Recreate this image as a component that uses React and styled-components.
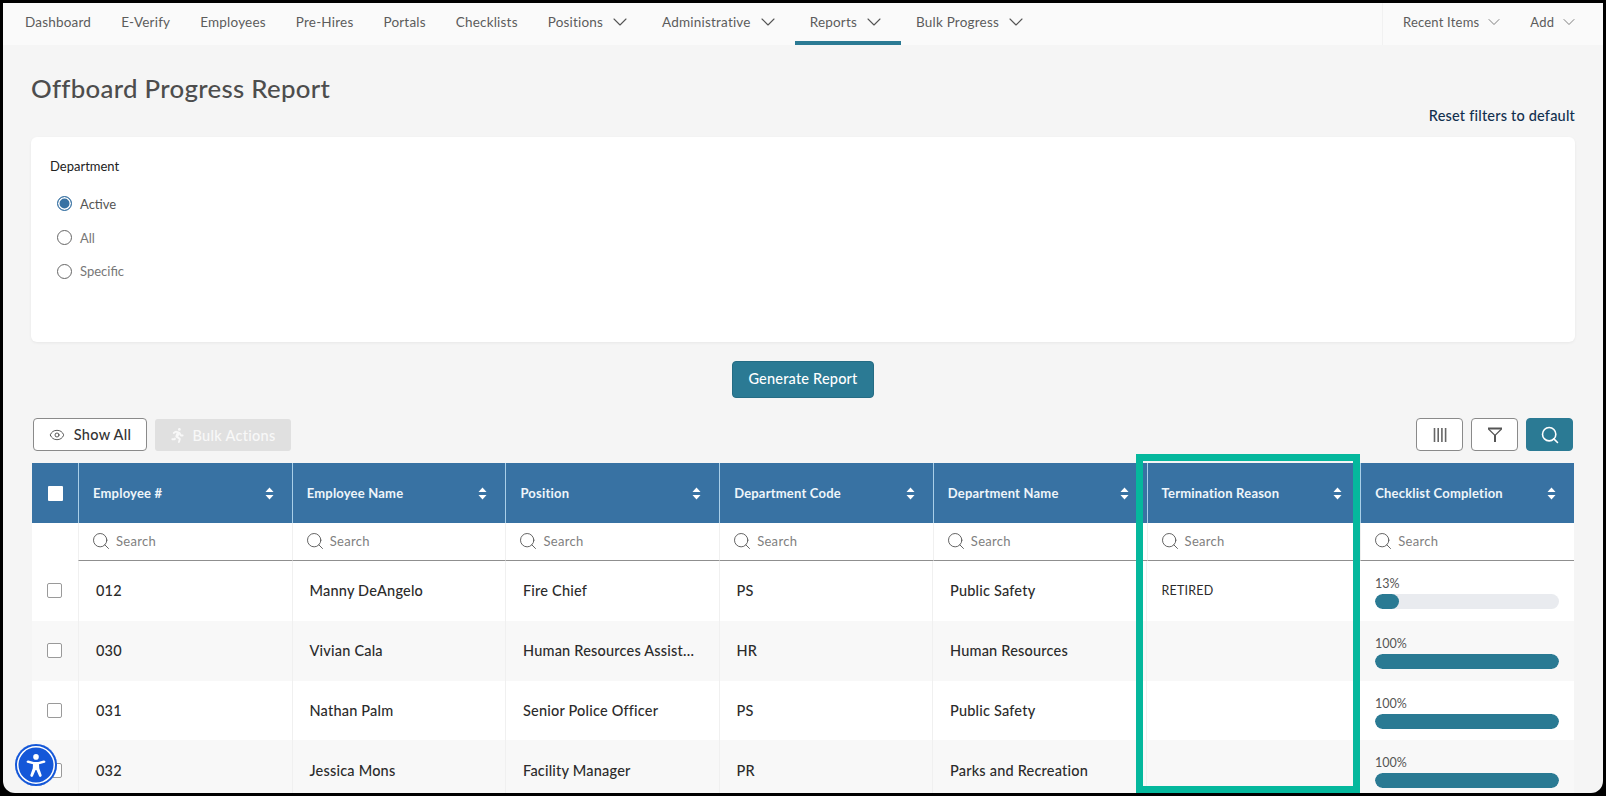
import React from 'react';
import styled, { createGlobalStyle } from 'styled-components';
import { ChevronDown, Eye, Search } from 'lucide-react';
import { FaRunning } from 'react-icons/fa';

const GlobalStyle = createGlobalStyle`
  html, body {
    margin: 0;
    height: 100%;
    overflow: hidden;
    background: #000;
  }
  * { box-sizing: border-box; }
`;

const Frame = styled.div`
  position: relative;
  margin: 3px;
  height: 790px;
  overflow: hidden;
  background: #f5f5f5;
  border-radius: 0 0 12px 12px;
  font-family: Lato, "Liberation Sans", sans-serif;
`;

const Nav = styled.nav`
  display: flex;
  justify-content: space-between;
  height: 42px;
  background: #fafafa;
`;

const NavLeft = styled.div`
  display: flex;
  padding-left: 7px;
`;

const NavItem = styled.a`
  display: flex;
  align-items: center;
  gap: 5px;
  height: 42px;
  padding: 0 15px;
  color: #5c5c5c;
  font-size: 13.5px;
  letter-spacing: 0.2px;
  border-bottom: 4px solid ${({ $active }) => ($active ? '#2b7a94' : 'transparent')};
`;

const NavRight = styled.div`
  display: flex;
  align-items: center;
  gap: 26px;
  width: 221px;
  padding: 0 0 5px 20px;
  border-left: 1px solid #f1f1f1;
`;

const RightItem = styled.a`
  display: flex;
  align-items: center;
  gap: 5px;
  color: #5c5c5c;
  font-size: 13px;
  letter-spacing: 0.2px;
`;

const Main = styled.main`
  padding: 0 28px;
`;

const Title = styled.h1`
  margin: 0;
  padding-top: 25px;
  height: 61px;
  font-size: 25.8px;
  line-height: 36px;
  font-weight: 500;
  color: #4d4d4d;
  letter-spacing: 0.3px;
`;

const ResetRow = styled.div`
  display: flex;
  justify-content: flex-end;
  height: 31px;
  padding-top: 1px;
`;

const ResetLink = styled.a`
  color: #12304f;
  font-size: 14.5px;
  line-height: 18px;
  font-weight: 500;
  letter-spacing: 0.2px;
`;

const FilterCard = styled.section`
  height: 205px;
  padding: 20px 19px;
  background: #fff;
  border-radius: 6px;
  box-shadow: 0 1px 3px rgba(0, 0, 0, 0.06);
`;

const FieldLabel = styled.div`
  margin-bottom: 12px;
  color: #222;
  font-size: 13px;
  line-height: 18px;
`;

const RadioRow = styled.label`
  display: flex;
  align-items: center;
  gap: 8px;
  height: 33.7px;
  padding-left: 7px;
  color: ${({ $checked }) => ($checked ? '#555' : '#777')};
  font-size: 13px;
`;

const RadioDot = styled.span`
  width: 15px;
  height: 15px;
  border-radius: 50%;
  border: 1px solid ${({ $checked }) => ($checked ? '#3872a3' : '#666')};
  background: ${({ $checked }) => ($checked ? '#3872a3' : '#fff')};
  box-shadow: ${({ $checked }) => ($checked ? 'inset 0 0 0 1.5px #fff' : 'none')};
`;

const GenerateRow = styled.div`
  display: flex;
  justify-content: center;
  padding-top: 19px;
  height: 76px;
`;

const PrimaryButton = styled.button`
  width: 142px;
  height: 37px;
  padding: 0 0 2px;
  border: 1px solid #256c84;
  border-radius: 4px;
  background: #2b7a94;
  color: #fff;
  font: 500 14.5px Lato, sans-serif;
  letter-spacing: 0.2px;
`;

const Toolbar = styled.div`
  display: flex;
  justify-content: space-between;
  height: 45px;
  padding: 0 2px;
`;

const ToolGroup = styled.div`
  display: flex;
  gap: 8px;
`;

const OutlineButton = styled.button`
  display: flex;
  align-items: center;
  justify-content: center;
  gap: 9px;
  width: ${({ $wide }) => ($wide ? '114px' : '47px')};
  height: 33px;
  padding: 0;
  border: 1px solid #8a8a8a;
  border-radius: 4px;
  background: ${({ $filled }) => ($filled ? '#2b7a94' : '#fff')};
  border-color: ${({ $filled }) => ($filled ? '#2b7a94' : '#8a8a8a')};
  color: ${({ $filled }) => ($filled ? '#fff' : '#333')};
  font: 500 14.5px Lato, sans-serif;
  letter-spacing: 0.3px;
`;

const DisabledButton = styled.button`
  display: flex;
  align-items: center;
  justify-content: center;
  gap: 7px;
  width: 136px;
  height: 32px;
  margin-top: 1px;
  border: 0;
  border-radius: 3px;
  background: #e0e0e0;
  color: #f8f8f8;
  font: 500 14.5px Lato, sans-serif;
  letter-spacing: 0.3px;
`;

const TableWrap = styled.div`
  position: relative;
  margin: 0 1px;
`;

const Highlight = styled.div`
  position: absolute;
  left: 1104px;
  top: -9px;
  width: 224px;
  height: 339px;
  border: 7px solid #05b89d;
  pointer-events: none;
`;

const Grid = styled.div`
  display: grid;
  grid-template-columns: 46px repeat(7, 1fr);
`;

const HeaderRow = styled(Grid)`
  height: 60px;
  background: #3872a3;
`;

const HeadCheck = styled.div`
  display: flex;
  align-items: center;
  justify-content: center;
`;

const HeadBox = styled.span`
  width: 15px;
  height: 15px;
  background: #fff;
  border-radius: 1px;
`;

const HeadCell = styled.div`
  display: flex;
  align-items: center;
  justify-content: space-between;
  padding: 0 18px 0 14px;
  border-left: 1px solid #a9cfe8;
  color: #eef5fa;
  font-size: 13px;
  font-weight: 700;
  letter-spacing: 0.2px;
`;

const SearchRow = styled(Grid)`
  height: 38px;
  background: #fff;
`;

const SearchCell = styled.div`
  display: flex;
  align-items: center;
  gap: 5px;
  padding: 0 12px 2px;
  border-left: 1px solid #f0f0f0;
  border-bottom: 1px solid #8f8f8f;
  color: #808080;
  font-size: 13px;
  letter-spacing: 0.3px;
`;

const DataRow = styled(Grid)`
  height: 59.8px;
  background: ${({ $even }) => ($even ? '#f8f8f8' : '#fff')};
`;

const CheckCell = styled.div`
  display: flex;
  align-items: center;
  justify-content: center;
  padding-right: 1px;
`;

const RowBox = styled.span`
  width: 15px;
  height: 15px;
  background: #fff;
  border: 1px solid #9a9a9a;
  border-radius: 2px;
`;

const DataCell = styled.div`
  display: flex;
  align-items: center;
  min-width: 0;
  padding: 0 ${({ $small }) => ($small ? '15px' : '17px')};
  border-left: 1px solid #f0f0f0;
  color: #2b2b2b;
  font-size: ${({ $small }) => ($small ? '12.5px' : '14.5px')};
  font-weight: ${({ $small }) => ($small ? 400 : 500)};
  letter-spacing: 0.2px;
`;

const Truncate = styled.span`
  overflow: hidden;
  white-space: nowrap;
  text-overflow: ellipsis;
  padding-right: 3px;
`;

const ProgressCell = styled.div`
  padding: 15px 15px 0;
  border-left: 1px solid #f0f0f0;
`;

const ProgressLabel = styled.div`
  height: 18px;
  color: #555;
  font-size: 12.5px;
  line-height: 16px;
`;

const ProgressTrack = styled.div`
  width: 184px;
  height: 15px;
  overflow: hidden;
  border-radius: 8px;
  background: #e9ebef;
`;

const ProgressFill = styled.div`
  height: 100%;
  border-radius: 8px;
  background: #2a7a93;
`;

const A11yButton = styled.div`
  position: absolute;
  left: 12px;
  bottom: 7px;
  display: flex;
  align-items: center;
  justify-content: center;
  width: 42px;
  height: 42px;
  border-radius: 50%;
  background: #1457d8;
  box-shadow: inset 0 0 0 2px #1457d8, inset 0 0 0 3.5px #fff;
`;

const SortIcon = () => (
  <svg width="9" height="13" viewBox="0 0 9 13" fill="#fff">
    <path d="M4.5 0.5 L8.5 5 H0.5 Z" />
    <path d="M0.5 8 H8.5 L4.5 12.5 Z" />
  </svg>
);

const ColumnsIcon = () => (
  <svg width="16" height="16" viewBox="0 0 16 16" stroke="#666" strokeWidth="1.6">
    <path d="M2.5 1 V15 M6.2 1 V15 M9.9 1 V15 M13.6 1 V15" />
  </svg>
);

const FunnelIcon = () => (
  <svg width="16" height="16" viewBox="0 0 16 16" fill="none" stroke="#555">
    <path d="M1 1.5 H15" strokeWidth="2" />
    <path d="M1.5 2 L8 8.5 L14.5 2" strokeWidth="1.2" />
    <path d="M8 8 V15" strokeWidth="2" />
  </svg>
);

const A11yIcon = () => (
  <svg width="28" height="28" viewBox="0 0 26 26" fill="#fff">
    <circle cx="13" cy="5.5" r="2.6" />
    <path d="M4.5 9.3 C4.1 9.9 4.4 10.7 5 10.9 L10.2 12.3 L10 16 L7.8 22.4 C7.6 23.1 8 23.8 8.6 24 C9.3 24.2 9.9 23.9 10.2 23.2 L12.6 17.6 H13.4 L15.8 23.2 C16.1 23.9 16.7 24.2 17.4 24 C18 23.8 18.4 23.1 18.2 22.4 L16 16 L15.8 12.3 L21 10.9 C21.6 10.7 21.9 9.9 21.5 9.3 C21.2 8.8 20.6 8.6 20.1 8.8 L15 10.1 H11 L5.9 8.8 C5.4 8.6 4.8 8.8 4.5 9.3 Z" />
  </svg>
);

const navItems = [
  { label: 'Dashboard' },
  { label: 'E-Verify' },
  { label: 'Employees' },
  { label: 'Pre-Hires' },
  { label: 'Portals' },
  { label: 'Checklists' },
  { label: 'Positions', menu: true },
  { label: 'Administrative', menu: true },
  { label: 'Reports', menu: true, active: true },
  { label: 'Bulk Progress', menu: true },
];

const columns = [
  'Employee #',
  'Employee Name',
  'Position',
  'Department Code',
  'Department Name',
  'Termination Reason',
  'Checklist Completion',
];

const rows = [
  { id: '012', name: 'Manny DeAngelo', position: 'Fire Chief', code: 'PS', dept: 'Public Safety', reason: 'RETIRED', pct: 13 },
  { id: '030', name: 'Vivian Cala', position: 'Human Resources Assistant', code: 'HR', dept: 'Human Resources', reason: '', pct: 100 },
  { id: '031', name: 'Nathan Palm', position: 'Senior Police Officer', code: 'PS', dept: 'Public Safety', reason: '', pct: 100 },
  { id: '032', name: 'Jessica Mons', position: 'Facility Manager', code: 'PR', dept: 'Parks and Recreation', reason: '', pct: 100 },
];

const App = () => (
  <Frame>
    <GlobalStyle />
    <Nav>
      <NavLeft>
        {navItems.map((item) => (
          <NavItem key={item.label} $active={item.active}>
            {item.label}
            {item.menu && <ChevronDown size={24} strokeWidth={1.1} color="#555" />}
          </NavItem>
        ))}
      </NavLeft>
      <NavRight>
        <RightItem>
          Recent Items <ChevronDown size={20} strokeWidth={1} color="#666" />
        </RightItem>
        <RightItem>
          Add <ChevronDown size={20} strokeWidth={1} color="#666" />
        </RightItem>
      </NavRight>
    </Nav>

    <Main>
      <Title>Offboard Progress Report</Title>
      <ResetRow>
        <ResetLink>Reset filters to default</ResetLink>
      </ResetRow>

      <FilterCard>
        <FieldLabel>Department</FieldLabel>
        <RadioRow $checked>
          <RadioDot $checked /> Active
        </RadioRow>
        <RadioRow>
          <RadioDot /> All
        </RadioRow>
        <RadioRow>
          <RadioDot /> Specific
        </RadioRow>
      </FilterCard>

      <GenerateRow>
        <PrimaryButton>Generate Report</PrimaryButton>
      </GenerateRow>

      <Toolbar>
        <ToolGroup>
          <OutlineButton $wide>
            <Eye size={16} strokeWidth={1.2} /> Show All
          </OutlineButton>
          <DisabledButton>
            <FaRunning size={15} /> Bulk Actions
          </DisabledButton>
        </ToolGroup>
        <ToolGroup>
          <OutlineButton><ColumnsIcon /></OutlineButton>
          <OutlineButton><FunnelIcon /></OutlineButton>
          <OutlineButton $filled><Search size={20} strokeWidth={1.9} /></OutlineButton>
        </ToolGroup>
      </Toolbar>

      <TableWrap>
        <HeaderRow>
          <HeadCheck><HeadBox /></HeadCheck>
          {columns.map((col) => (
            <HeadCell key={col}>
              {col}
              <SortIcon />
            </HeadCell>
          ))}
        </HeaderRow>
        <SearchRow>
          <div />
          {columns.map((col) => (
            <SearchCell key={col}>
              <Search size={20} strokeWidth={1.1} color="#555" />
              Search
            </SearchCell>
          ))}
        </SearchRow>
        {rows.map((row, index) => (
          <DataRow key={row.id} $even={index % 2 === 1}>
            <CheckCell><RowBox /></CheckCell>
            <DataCell>{row.id}</DataCell>
            <DataCell>{row.name}</DataCell>
            <DataCell><Truncate>{row.position}</Truncate></DataCell>
            <DataCell>{row.code}</DataCell>
            <DataCell>{row.dept}</DataCell>
            <DataCell $small>{row.reason}</DataCell>
            <ProgressCell>
              <ProgressLabel>{row.pct}%</ProgressLabel>
              <ProgressTrack>
                <ProgressFill style={{ width: `${row.pct}%` }} />
              </ProgressTrack>
            </ProgressCell>
          </DataRow>
        ))}
        <Highlight />
      </TableWrap>
    </Main>

    <A11yButton><A11yIcon /></A11yButton>
  </Frame>
);

export default App;
